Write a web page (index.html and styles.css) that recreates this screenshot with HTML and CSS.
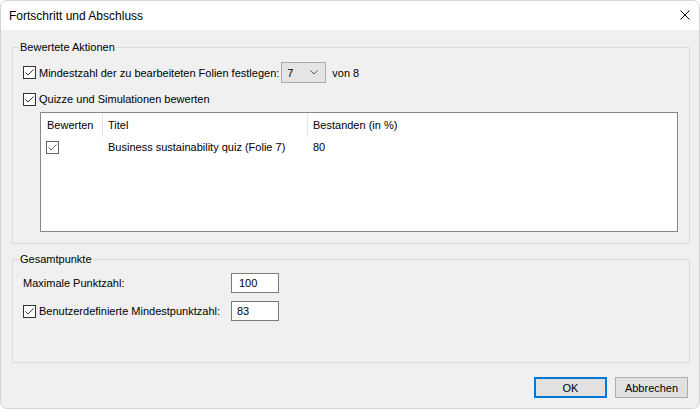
FILE: index.html
```html
<!DOCTYPE html>
<html lang="de">
<head>
  <meta charset="UTF-8">
  <title>Fortschritt und Abschluss</title>
  <link rel="stylesheet" href="styles.css">
</head>
<body>
  <div class="dialog">
    <div class="titlebar">
      <span class="title">Fortschritt und Abschluss</span>
      <span class="close">
        <svg width="10" height="10" viewBox="0 0 10 10"><path d="M0.5 0.5 L9.5 9.5 M9.5 0.5 L0.5 9.5" stroke="#000" stroke-width="1" fill="none"/></svg>
      </span>
    </div>

    <div class="content">
      <fieldset class="group group-actions">
        <legend>Bewertete Aktionen</legend>
        <div class="row row-min">
          <span class="box">
            <svg width="13" height="13" viewBox="0 0 13 13"><rect x="0.5" y="0.5" width="12" height="12" fill="#fff" stroke="#333"/><polyline points="2.5,6.5 5,9 10.5,3.5" fill="none" stroke="#333" stroke-width="1"/></svg>
          </span>
          <span class="check-label">Mindestzahl der zu bearbeiteten Folien festlegen:</span>
          <div class="select">
            <span>7</span>
            <svg width="8" height="5" viewBox="0 0 8 5"><polyline points="0.5,0.5 4,4 7.5,0.5" fill="none" stroke="#555" stroke-width="1"/></svg>
          </div>
          <span class="of">von 8</span>
        </div>
        <div class="row row-quiz">
          <span class="box">
            <svg width="13" height="13" viewBox="0 0 13 13"><rect x="0.5" y="0.5" width="12" height="12" fill="#fff" stroke="#333"/><polyline points="2.5,6.5 5,9 10.5,3.5" fill="none" stroke="#333" stroke-width="1"/></svg>
          </span>
          <span class="check-label">Quizze und Simulationen bewerten</span>
        </div>

        <div class="list">
          <div class="list-head">
            <span>Bewerten</span>
            <span>Titel</span>
            <span>Bestanden (in %)</span>
          </div>
          <div class="list-row">
            <span class="cell-check">
              <svg width="13" height="13" viewBox="0 0 13 13"><rect x="0.5" y="0.5" width="12" height="12" fill="#fff" stroke="#666"/><polyline points="2.5,6.5 5,9 10.5,3.5" fill="none" stroke="#666" stroke-width="1"/></svg>
            </span>
            <span>Business sustainability quiz (Folie 7)</span>
            <span>80</span>
          </div>
        </div>
      </fieldset>

      <fieldset class="group group-points">
        <legend>Gesamtpunkte</legend>
        <div class="row row-field">
          <span class="field-label">Maximale Punktzahl:</span>
          <span class="input input-max">100</span>
        </div>
        <div class="row row-field row-custom">
          <span class="field-label">
            <span class="box">
              <svg width="13" height="13" viewBox="0 0 13 13"><rect x="0.5" y="0.5" width="12" height="12" fill="#fff" stroke="#333"/><polyline points="2.5,6.5 5,9 10.5,3.5" fill="none" stroke="#333" stroke-width="1"/></svg>
            </span>
            <span class="check-label">Benutzerdefinierte Mindestpunktzahl:</span>
          </span>
          <span class="input">83</span>
        </div>
      </fieldset>

      <div class="buttons">
        <button class="btn btn-default">OK</button>
        <button class="btn">Abbrechen</button>
      </div>
    </div>
  </div>
</body>
</html>
```

FILE: styles.css
```css
html, body {
  margin: 0;
  padding: 0;
  background: #fff;
}
body {
  font-family: "Liberation Sans", Arial, sans-serif;
  font-size: 11px;
  color: #000;
}
.dialog {
  width: 700px;
  height: 409px;
  box-sizing: border-box;
  border: 1px solid #d4d4d4;
  border-radius: 7px;
  overflow: hidden;
  background: #f0f0f0;
}
.titlebar {
  height: 29px;
  background: #fff;
  display: flex;
  align-items: center;
  justify-content: space-between;
  padding: 0 9px 0 8px;
}
.title {
  font-size: 12px;
  line-height: 16px;
}
.close {
  display: flex;
  width: 10px;
  height: 10px;
  margin-top: -1px;
}
.content {
  padding: 9px 9px 0 11px;
}

/* Group boxes */
.group {
  margin: 0;
  border: 1px solid #dcdcdc;
  padding: 0 10px;
  box-sizing: border-box;
  min-width: 0;
}
.group legend {
  padding: 0 1px;
  margin-left: -4px;
  line-height: 16px;
}
.group-actions {
  height: 205px;
  padding-top: 7px;
}
.group-points {
  height: 112px;
  margin-top: 7px;
  padding-top: 6px;
}

.row {
  display: flex;
  align-items: center;
}
.box {
  display: flex;
  width: 13px;
  height: 13px;
}
.check-label {
  margin-left: 3px;
  white-space: nowrap;
}
.row-min {
  height: 21px;
}
.row-quiz {
  height: 16px;
  margin-top: 8px;
}
.select {
  display: flex;
  align-items: center;
  justify-content: space-between;
  box-sizing: border-box;
  width: 45px;
  height: 21px;
  margin-left: 2px;
  padding: 0 7px 0 5px;
  background: #e5e5e5;
  border: 1px solid #acacac;
}
.of {
  margin-left: 6px;
}

/* List view */
.list {
  margin: 5px 0 0 17px;
  width: 638px;
  height: 120px;
  box-sizing: border-box;
  border: 1px solid #828790;
  background: #fff;
}
.list-head,
.list-row {
  display: grid;
  grid-template-columns: 62px 205px 1fr;
}
.list-head {
  height: 24px;
}
.list-head span {
  display: flex;
  align-items: center;
  padding-left: 5px;
  border-right: 1px solid #e5e5e5;
}
.list-head span:first-child {
  padding-left: 6px;
}
.list-head span:last-child {
  border-right: none;
}
.list-row {
  height: 20px;
}
.list-row span {
  display: flex;
  align-items: center;
  padding-left: 5px;
}

/* Points */
.row-field {
  height: 20px;
}
.row-custom {
  margin-top: 8px;
}
.field-label {
  display: flex;
  align-items: center;
  width: 208px;
}
.input {
  display: flex;
  align-items: center;
  box-sizing: border-box;
  width: 48px;
  height: 20px;
  padding-left: 5px;
  background: #fff;
  border: 1px solid #7a7a7a;
}
.input-max {
  padding-left: 7px;
}

/* Buttons */
.buttons {
  display: flex;
  justify-content: flex-end;
  gap: 8px;
  margin-top: 14px;
  padding-right: 2px;
}
.btn {
  width: 73px;
  height: 21px;
  box-sizing: border-box;
  margin: 0;
  padding: 0;
  font: inherit;
  color: #000;
  background: #e1e1e1;
  border: 1px solid #adadad;
}
.btn-default {
  border: 2px solid #0078d7;
}
```
